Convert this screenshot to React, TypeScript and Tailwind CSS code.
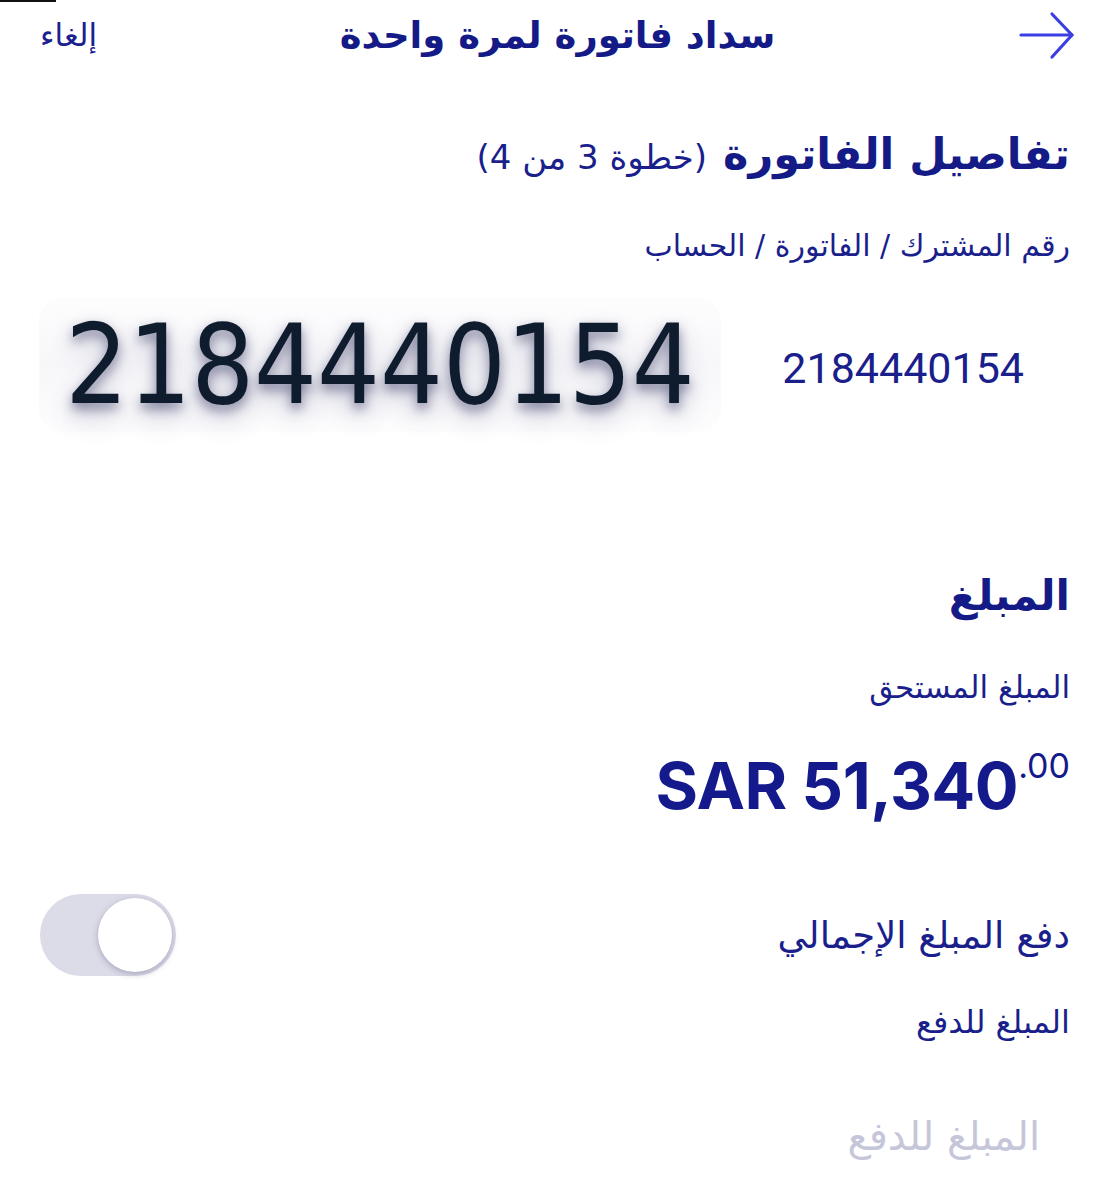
import React from "react";

const ar = { fontFamily: '"DejaVu Sans", "Noto Sans", sans-serif' };

function BackArrow() {
  return (
    <svg width="56" height="50" viewBox="0 0 56 50" fill="none" stroke="#3b3fe3" strokeWidth="3.2" strokeLinecap="round" strokeLinejoin="round">
      <path d="M2 24 H53" />
      <path d="M33 3 L53 24 L33 46" />
    </svg>
  );
}

function Toggle() {
  return (
    <div className="relative h-[82px] w-[136px] rounded-full bg-[#dcdce8]">
      <div className="absolute left-[58px] top-[4px] h-[74px] w-[74px] rounded-full bg-white shadow-[0_2px_6px_rgba(60,60,110,0.35)]" />
    </div>
  );
}

export default function App() {
  return (
    <div dir="rtl" className="relative min-h-[1200px] w-[1113px] overflow-hidden bg-white text-[#1a1f8c]" style={ar}>
      <div className="absolute left-0 top-0 h-[2px] w-[56px] bg-[#111]" />

      {/* header */}
      <header className="flex h-[70px] items-center pl-[40px] pr-[38px]">
        <div className="flex w-[120px] justify-start pt-[2px]">
          <BackArrow />
        </div>
        <h1 className="flex-1 text-center text-[37px] font-bold leading-none text-[#141a86]">سداد فاتورة لمرة واحدة</h1>
        <div className="flex w-[120px] justify-end">
          <span className="text-[31px] leading-none text-[#1b2090]">إلغاء</span>
        </div>
      </header>

      <main className="pl-[40px] pr-[43px]">
        <div className="mt-[63px] flex items-baseline gap-[16px]">
          <h2 className="text-[43px] font-bold leading-none text-[#141a86]">تفاصيل الفاتورة</h2>
          <span className="text-[34px] leading-none">(خطوة 3 من 4)</span>
        </div>

        <p className="mt-[55px] text-[30px] leading-none">رقم المشترك / الفاتورة / الحساب</p>

        <div className="mt-[39px] flex items-center">
          <span className="mr-[46px] pt-[7px] text-[43px] leading-none" style={{ fontFamily: "Roboto, sans-serif" }}>
            2184440154
          </span>
          <div className="mr-auto flex h-[130px] w-[680px] items-center justify-center rounded-[22px] bg-gradient-to-b from-[#fdfdfe] via-[#f7f7fa] to-[#fdfdfe] shadow-[0_0_3px_rgba(0,0,0,0.05)]">
            <span
              className="text-[110px] font-medium leading-none text-[#0f1c2d] [text-shadow:0_6px_12px_rgba(30,30,80,0.5),0_14px_26px_rgba(70,70,120,0.3)]"
              style={{ fontFamily: '"DejaVu Sans Condensed", "DejaVu Sans", sans-serif' }}
            >
              2184440154
            </span>
          </div>
        </div>

        <h2 className="mt-[145px] text-[42px] font-bold leading-none text-[#141a86]">المبلغ</h2>

        <p className="mt-[55px] text-[31px] leading-none">المبلغ المستحق</p>

        <div dir="ltr" className="mt-[50px] flex justify-end text-[#141a8c]" style={{ fontFamily: "Inter, sans-serif" }}>
          <span className="text-[65px] font-bold leading-none tracking-[-0.5px]">SAR 51,340</span>
          <span className="mt-[-4px] text-[34px] leading-none">.00</span>
        </div>

        <div className="mt-[76px] flex items-center justify-between">
          <span className="text-[37px] leading-none">دفع المبلغ الإجمالي</span>
          <Toggle />
        </div>

        <p className="mt-[30px] text-[32px] leading-none">المبلغ للدفع</p>

        <div className="mt-[78px] pr-[30px]">
          <span className="text-[40px] leading-none text-[#c6c6da]">المبلغ للدفع</span>
        </div>
      </main>
    </div>
  );
}
